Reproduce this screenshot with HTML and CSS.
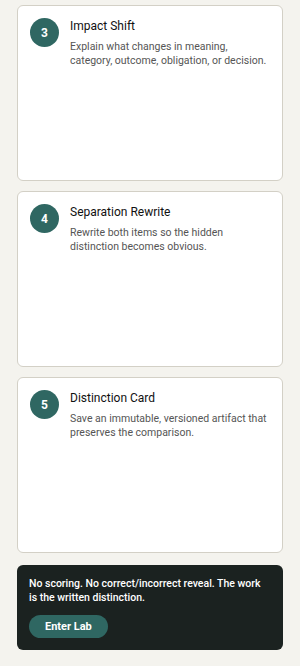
FILE: index.html
```html
<!DOCTYPE html>
<html lang="en">

<head>
  <meta charset="UTF-8">
  <meta name="viewport" content="width=device-width, initial-scale=1.0">
  <title>Distinction Lab</title>
  <link rel="stylesheet" href="styles.css">
</head>

<body>
  <main class="steps">
    <div class="step-card">
      <div class="step-num">3</div>
      <div class="step-body">
        <h3>Impact Shift</h3>
        <p>Explain what changes in meaning, category, outcome, obligation, or decision.</p>
      </div>
    </div>
    <div class="step-card">
      <div class="step-num">4</div>
      <div class="step-body">
        <h3>Separation Rewrite</h3>
        <p>Rewrite both items so the hidden distinction becomes obvious.</p>
      </div>
    </div>
    <div class="step-card">
      <div class="step-num">5</div>
      <div class="step-body">
        <h3>Distinction Card</h3>
        <p>Save an immutable, versioned artifact that preserves the comparison.</p>
      </div>
    </div>

    <div class="note-panel">
      <p>No scoring. No correct/incorrect reveal. The work is the written distinction.</p>
      <button type="button">Enter Lab</button>
    </div>
  </main>
</body>
</html>
```

FILE: styles.css
```css
body {
  margin: 0;
  background-color: #f4f3ee;
  font-family: Roboto, "Liberation Sans", sans-serif;
}

.steps {
  display: flex;
  flex-direction: column;
  gap: 10px;
  padding: 5px 17px 18px;
}

.step-card {
  display: flex;
  gap: 11px;
  height: 176px;
  box-sizing: border-box;
  padding: 12px;
  background-color: #fff;
  border: 1px solid #d3d0c6;
  border-radius: 6px;
}

.step-num {
  flex: none;
  width: 29px;
  height: 29px;
  border-radius: 50%;
  background-color: #2f6762;
  color: #fff;
  font-size: 12px;
  font-weight: 700;
  display: flex;
  justify-content: center;
  align-items: center;
}

.step-body h3 {
  margin: 1px 0 6px;
  font-size: 12px;
  font-weight: 400;
  color: #111;
  line-height: 15px;
}

.step-body p {
  margin: 0;
  font-size: 10.5px;
  line-height: 14px;
  color: #555;
}

.note-panel {
  margin-top: 2px;
  padding: 12px;
  background-color: #1b2220;
  border-radius: 6px;
}

.note-panel p {
  margin: 0 0 10px;
  font-size: 10.5px;
  line-height: 14px;
  font-weight: 500;
  color: #fff;
}

.note-panel button {
  padding: 0 16px;
  height: 23px;
  border: none;
  border-radius: 12px;
  background-color: #2f6762;
  color: #fff;
  font-family: inherit;
  font-size: 11px;
  font-weight: 700;
  cursor: pointer;
}
```
